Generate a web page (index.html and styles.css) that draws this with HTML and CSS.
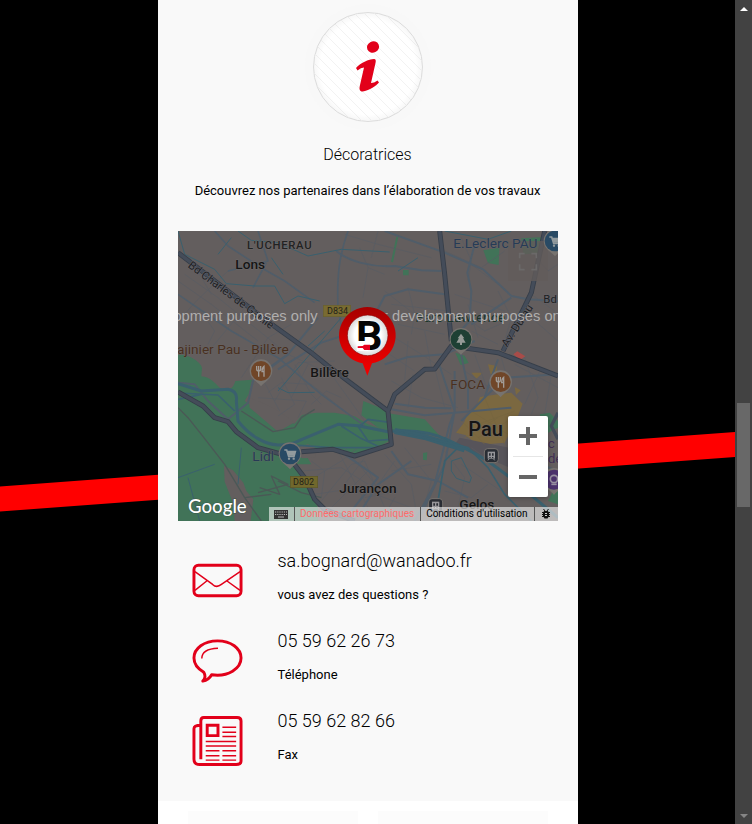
FILE: index.html
```html
<!DOCTYPE html>
<html lang="fr">
<head>
<meta charset="utf-8">
<meta name="viewport" content="width=device-width, initial-scale=1">
<title>Bognard - Contact</title>
<link rel="stylesheet" href="styles.css">
</head>
<body>
<div class="viewport">
  <svg class="stripe" viewBox="0 0 735 824" preserveAspectRatio="none" aria-hidden="true">
    <path d="M0 486.500L735 432V457L0 511.500Z" fill="#f00"/>
  </svg>

  <main class="page">
    <section class="contact">
      <div class="badge">
        <svg viewBox="0 0 108 108" aria-hidden="true">
          <defs>
            <pattern id="hatch" width="10" height="10" patternUnits="userSpaceOnUse">
              <path d="M-1 -1L11 11" stroke="#f2f2f2" stroke-width="1"/>
            </pattern>
            <radialGradient id="rim"><stop offset=".88" stop-color="#000" stop-opacity="0"/><stop offset="1" stop-color="#000" stop-opacity=".03"/></radialGradient>
          </defs>
          <circle cx="54" cy="54" r="54" fill="url(#hatch)"/>
          <circle cx="54" cy="54" r="54" fill="url(#rim)"/>
          <ellipse cx="59" cy="34" rx="6.200" ry="5.600" transform="rotate(-25 59 34)" fill="#e2001a"/>
          <path d="M42 55C46 50 55 46 60 46C62 46 62 48 61.500 50L57 70Q60 70 63.500 67.500L65 69.500C60 75 52 78.500 48.500 78.500C45.500 78.500 45 76 46 72L50 54.500Q47 54.500 43.500 57.500Z" fill="#e2001a"/>
        </svg>
      </div>
      <h2 class="heading">Décoratrices</h2>
      <p class="intro">Découvrez nos partenaires dans l’élaboration de vos travaux</p>

      <div class="map">
        <svg class="map-canvas" viewBox="0 0 1140 870" role="img" aria-label="Carte de Pau et Billère">
          <rect width="1140" height="870" fill="#635e5e"/>

          <g fill="#417358">
            <path d="M0 372C30 368 72 395 72 412L70 436C95 438 110 455 125 470C150 482 165 475 172 450L222 446L212 490L200 510L240 535L260 553L350 578L372 552L415 545L470 545L530 556L570 580L600 590L640 596L634 630L560 672L470 655L380 665L400 700L340 700L362 725L400 790L420 830V870H0Z"/>
            <path d="M556 510L625 538L640 548L740 565L785 614L700 604L640 596L600 590L550 553Z"/>
            <path d="M655 17L661 17L645 94L639 92ZM916 58L964 50L962 102L930 96ZM1030 22L1100 18L1090 66L1036 70ZM675 117L692 117L692 133L675 133ZM832 365L860 374L872 396L848 402ZM1085 550L1115 545L1140 570V590L1110 605ZM735 666L748 664L746 688L735 686ZM1130 770L1140 760V820L1110 810Z"/>
          </g>
          <g fill="#635e5e">
            <path d="M138 705L165 718L196 755L205 780L226 805L218 870H170L165 815L140 752ZM212 500C290 525 330 560 350 574L300 602L215 530ZM345 652L390 640L415 652L412 680L372 682Z"/>
          </g>
          <g fill="#7b6840">
            <path d="M906 498L960 490L1000 485L1034 518L1020 555L1002 590L980 635L900 642L862 612L834 605L858 575L870 545L893 532ZM930 400L957 405L956 428L938 430ZM880 425L914 425L895 443ZM1010 468L1028 478L1014 492Z"/>
          </g>
          <path d="M1006 370L1018 361L1042 376L1026 387Z" fill="#a84c49"/>
          <path d="M845 620L1000 652V712L905 672L830 640Z" fill="#57545a"/>

          <!-- Minor streets -->
          <g fill="none" stroke="#575c64" stroke-width="2">
            <path d="M20 130L120 200L330 370L460 430L560 570M30 70L100 190M0 150L100 220L240 330M60 230L110 300L90 340M0 270L60 205L150 120M105 345L205 225M190 440L270 320L340 280"/>
            <path d="M270 485L310 455L400 460L500 540M290 510L360 395L470 390M240 500L385 510L360 560M310 440L350 520L300 555M350 400L400 490L430 520M260 455L305 540M390 400L340 500M400 520L445 480L490 500"/>
            <path d="M500 10L600 40L760 80M545 50L570 110L620 130M570 110L555 200M600 0L580 80M620 180L710 250L700 310M640 220L810 240M690 170L710 250L790 270M660 280L800 310M650 320L730 370L820 430M690 330L680 450M740 300L760 410M620 360L710 420M640 450L730 500L840 530M705 430L690 530M770 410L800 530"/>
            <path d="M850 20L880 90L870 150M800 60L910 110L980 60M880 100L960 160M830 190L980 240M850 250L920 300L1010 260M870 220L900 320M960 180L1000 260L980 330M1040 40L1110 120L1140 100M1060 190L1130 240M1060 260L1140 330M880 300L960 340M860 420L950 480M890 370L930 480M970 380L990 450M1010 400L1140 470M1040 380L1080 500L1060 550M1090 410L1040 520M1120 430L1100 550"/>
            <path d="M370 720L490 710L570 760M390 750L490 690L540 650M410 790L540 770L700 830M430 810L520 700L560 690L620 830M440 850L570 720M480 660L570 830L560 870M500 650L600 770M620 670L700 760L720 870M650 690L580 790M680 650L760 750L740 820M640 720L760 700M560 800L660 780M800 660L860 740L840 830M850 700L970 780M880 650L950 700M400 690L440 720L430 800M560 680L500 760M650 800L610 870M800 780L880 800L930 760"/>
            <path d="M850 570L920 640M880 540L990 610M920 500L980 640M860 620L960 560M900 580L1010 540M900 620L990 570" stroke="#75653f"/>
          </g>

          <!-- Secondary roads -->
          <g fill="none" stroke="#505d69" stroke-width="6" stroke-linejoin="round">
            <path d="M110 0L150 45L250 110L320 150L410 215M510 0C485 70 476 130 480 230L500 340M150 120L270 90L240 0M265 95L225 170M0 190L160 300L300 380L430 490L560 585" stroke-width="5"/>
            <path d="M475 60C510 90 580 110 650 105L730 118L790 120M800 190L690 175L620 195L570 290L430 335L300 415M420 260L330 370L245 430M620 400L690 378L800 370L890 330"/>
            <path d="M620 0L800 65L915 115L1000 195L1050 205L1140 210M890 40L868 125L880 180L875 270L820 330M1000 200L880 280M640 535L740 553L830 545L1000 530M650 518L740 530L820 532M780 390L830 540L815 580L770 760L710 870M845 350L870 470L870 535M830 420L830 540L800 700L730 850M960 385L940 440L920 500"/>
            <path d="M0 455L50 460L90 510L150 565L210 515L225 450L330 370M640 660L690 730L780 750L870 800M700 690L600 760L555 830M850 570L980 440L1140 430M520 840L600 740L500 670M1060 690L1140 720"/>
            <path d="M0 530L30 560L70 610L140 700L200 800L250 870M190 540L285 602L350 590L370 560L410 535M240 785L330 760L280 735L305 790L245 770M200 800L280 790M300 750L370 785L430 800" stroke="#4b5856" stroke-width="4"/>
          </g>

          <!-- Rivers and canals -->
          <g fill="none" stroke="#3a606e" stroke-linejoin="round">
            <path d="M0 458L70 480L150 475Q180 480 175 510L180 570C215 615 260 640 300 642Q340 643 370 626L480 580L540 584L630 602Q740 590 820 632C920 680 930 690 990 735L1140 860" stroke-width="9"/>
            <path d="M650 600L740 618L860 655" stroke-width="18"/>
            <path d="M540 586L570 630L640 625M640 597L740 620L870 650L930 710L980 790L1060 870M490 585L545 620L610 650L460 650L320 640M0 486L120 492L170 540M0 505L70 490M545 585L570 565L640 575M800 620L840 650L800 690L770 870" stroke-width="5"/>
            <path d="M0 0L20 70L110 115L145 158L230 165L290 165L320 218L360 195L425 210M180 0L220 28L300 35L390 75L490 55L635 63M280 80L315 130M160 20L120 70M490 260L370 400L300 480M440 300L390 345M300 470L330 485L410 484M0 740L110 700M30 740L65 870M800 0L930 25L1000 0M660 120L720 80M190 650L180 760M820 690L850 680L880 740L875 755L835 742L820 720Z" stroke-width="3"/>
          </g>

          <!-- Main roads -->
          <g fill="none" stroke-linejoin="round">
            <path d="M0 65L260 265L400 365L450 405L630 540L640 640L530 675L465 655L370 662M0 483L75 525L110 560L150 572L175 602L240 650L330 675L380 740L410 805L440 835L530 870M630 540L650 490L740 415L770 414L820 345L960 365L1140 435M785 0L800 130L820 330M1100 0L1060 185L975 360" stroke="#363e49" stroke-width="15"/>
            <path d="M0 65L260 265L400 365L450 405L630 540L640 640L530 675L465 655L370 662M0 483L75 525L110 560L150 572L175 602L240 650L330 675L380 740L410 805L440 835L530 870M630 540L650 490L740 415L770 414L820 345L960 365L1140 435M785 0L800 130L820 330M1100 0L1060 185L975 360M1140 545L1120 585L1140 625" stroke="#444c59" stroke-width="10"/>
          </g>

          <rect x="990" y="30" width="120" height="120" fill="#615b5a" opacity=".8"/>
          <path d="M1025 82V68H1040M1060 68H1075V82M1025 100V116H1040M1060 116H1075V100" fill="none" stroke="#6b6969" stroke-width="5"/>

          <g class="road-sign">
            <rect x="436" y="223" width="82" height="34" fill="#796b31" stroke="#6a602e" stroke-width="2"/><text x="447" y="249">D834</text>
            <rect x="337" y="736" width="82" height="34" fill="#71682c" stroke="#5e5827" stroke-width="2"/><text x="345" y="762">D802</text>
          </g>

          <!-- Place names -->
          <g class="place">
            <text class="district" x="207" y="53">L'UCHERAU</text>
            <text x="172" y="114">Lons</text>
            <text x="397" y="438">Billère</text>
            <text x="484" y="786">Jurançon</text>
            <text x="844" y="834">Gelos</text>
            <text class="city" x="871" y="614">Pau</text>
          </g>
          <g class="street">
            <text transform="translate(28 107) rotate(37)">Bd Charles de Gaulle</text>
            <text transform="translate(988 350) rotate(-57)">Av. Dufau</text>
            <text x="1096" y="215">Bd</text>
          </g>
          <g class="poi">
            <text class="food" x="-3" y="368">ajinier Pau - Billère</text>
            <text class="food" x="817" y="473">FOCA</text>
            <text class="shop" x="826" y="50">E.Leclerc PAU</text>
            <text class="shop" x="223" y="690">Lidl</text>
            <text class="park" x="712" y="274">Parc Lawrence</text>
            <text class="castle" x="1109" y="652">c</text>
            <text class="castle" x="1109" y="695">de</text>
          </g>

          <!-- Place pins -->
          <defs>
            <path id="pin" d="M0 46C-7 34 -34 25 -34 -1A34 34 0 1 1 34 -1C34 25 7 34 0 46Z" fill="#77736f"/>
            <g id="cutlery" fill="none" stroke="#a19c97" stroke-width="4"><path d="M-13 -15V-6Q-13 0 -7 0Q-1 0 -1 -6V-15M-7 -15V17M9 17V-14Q3 -10 3 2H9"/></g>
            <g id="cart"><path d="M-17 -12H-10L-4 7H12L16 -7H-8" fill="none" stroke="#929b9e" stroke-width="5"/><path d="M-8 -7H16L12 5H-4Z" fill="#929b9e"/><circle cx="-3" cy="14" r="3.500" fill="#929b9e"/><circle cx="11" cy="14" r="3.500" fill="#929b9e"/></g>
            <g id="station"><rect x="-21" y="-21" width="42" height="42" rx="10" fill="#292d34" stroke="#77736f" stroke-width="3"/><path d="M-11 -12H11V9H-11Z" fill="#96969a"/><path d="M-7 -7H-2V0H-7ZM2 -7H7V0H2ZM-6 4H-2V7H-6ZM2 4H6V7H2Z" fill="#292d34"/><path d="M-10 14L-7 10M10 14L7 10" stroke="#96969a" stroke-width="3"/></g>
          </defs>
          <g transform="translate(249 420)"><use href="#pin"/><circle r="30" fill="#704628"/><use href="#cutlery"/></g>
          <g transform="translate(968 453)"><use href="#pin"/><circle r="30" fill="#704628"/><use href="#cutlery"/></g>
          <g transform="translate(336 669)"><use href="#pin"/><circle r="31" fill="#294a64"/><use href="#cart"/></g>
          <g transform="translate(1131 30)"><use href="#pin"/><circle r="31" fill="#294a64"/><use href="#cart"/></g>
          <g transform="translate(849 326)"><use href="#pin"/><circle r="31" fill="#1e4034"/><path d="M0 -18L10 -4H6L14 9H3V16H-3V9H-14L-6 -4H-10Z" fill="#959b97"/></g>
          <g transform="translate(1128 746)"><use href="#pin"/><circle r="30" fill="#4b316c"/><circle cy="-2" r="11" fill="none" stroke="#9890a1" stroke-width="5"/><path d="M-8 14H8" stroke="#9890a1" stroke-width="5"/></g>
          <use href="#station" x="940" y="674"/>
          <use href="#station" x="773" y="824"/>

          <!-- Watermark -->
          <g class="watermark">
            <text x="419" y="271" text-anchor="end">For development purposes only</text>
            <text x="564" y="271">For development purposes only</text>
          </g>

          <!-- Agency marker -->
          <defs>
            <linearGradient id="red" x2="0" y2="1"><stop stop-color="#a60000"/><stop offset=".5" stop-color="#d10000"/><stop offset="1" stop-color="#f40000"/></linearGradient>
            <radialGradient id="disc"><stop offset=".65" stop-color="#fff"/><stop offset="1" stop-color="#d8d8d8"/></radialGradient>
          </defs>
          <path d="M568 434L554 397A85 85 0 1 1 582 397Z" fill="url(#red)"/>
          <circle cx="569" cy="313" r="61" fill="url(#disc)" stroke="#8f0000" stroke-width="2"/>
          <text class="logo-b" x="534" y="356">B</text>
          <path d="M536 330H571V360H536Z" fill="#fff"/>
          <path d="M539 346L554 345L559 341H576V357H559L554 351L539 351Z" fill="#e6001f"/>
          <text class="google" x="30" y="846">Google</text>
        </svg>

        <div class="zoom">
          <button type="button" aria-label="Zoom avant"><svg viewBox="0 0 18 18"><path d="M9 0V18M0 9H18" stroke="#666" stroke-width="4"/></svg></button>
          <button type="button" aria-label="Zoom arrière"><svg viewBox="0 0 18 18"><path d="M0 9H18" stroke="#666" stroke-width="4"/></svg></button>
        </div>

        <div class="legal">
          <button type="button" class="cell keys" aria-label="Raccourcis clavier"><svg viewBox="0 0 14 9"><rect width="14" height="9" fill="#333"/><path d="M1 2H13M1 4.500H13" stroke="#bbb" stroke-width="1.200" stroke-dasharray="1.200 1"/><path d="M4 7H10" stroke="#bbb"/></svg></button>
          <button type="button" class="cell data">Données cartographiques</button>
          <a class="cell terms" href="#conditions">Conditions d'utilisation</a>
          <a class="cell bug" href="#signaler" aria-label="Signaler une erreur"><svg viewBox="0 0 10 10"><path d="M3 2H7L8 4V7L6.500 9.500H3.500L2 7V4Z" fill="#111"/><path d="M2.500 0L4 2M7.500 0L6 2M1 3.500H9M1 5.500H9M1 7.500H9" stroke="#111"/><path d="M4 4.500H6M4 6.500H6" stroke="#ccc"/></svg></a>
        </div>
      </div>

      <ul class="details">
        <li class="detail">
          <svg class="icon" viewBox="0 0 52 52" aria-hidden="true"><g fill="none" stroke="#e2001a"><rect x="2" y="10.500" width="48" height="31" rx="4.500" stroke-width="3"/><path d="M3 17L21 30Q25 34 30 30L49 17M3 36L15 26.500M49 36L35 26" stroke-width="1.500"/></g></svg>
          <div><h3>sa.bognard@wanadoo.fr</h3><p>vous avez des questions ?</p></div>
        </li>
        <li class="detail">
          <svg class="icon" viewBox="0 0 52 52" aria-hidden="true"><g fill="none" stroke="#e2001a"><path d="M26 6C12.500 6 2 13.500 2 23.500C2 30 6 34.500 12 38Q15 43 11 47Q17 46 20 40.500C37 43 50 34 50 23.500C50 13.500 39.500 6 26 6Z" stroke-width="3" stroke-linejoin="round"/><path d="M10 24Q10 14 26.500 13.500" stroke-width="1.500"/></g></svg>
          <div><h3>05 59 62 26 73</h3><p>Téléphone</p></div>
        </li>
        <li class="detail">
          <svg class="icon" viewBox="0 0 52 52" aria-hidden="true"><g fill="none" stroke="#e2001a"><path d="M9 45V6Q9 2.500 12 2.500H46Q50 2.500 50 6V47Q50 50.500 45 50.500H8Q2 50.500 2 45V14Q2 10.500 9 10.500" stroke-width="3" stroke-linejoin="round"/><path d="M15.500 10.500H26.500V21H15.500Z" stroke-width="3"/><path d="M31 12.500H45M31 17.500H45M31 22H45M14 27H45M14 31.500H45M14 36.500H28M31 36.500H45M14 41.500H28M31 41.500H45M14 46H28M31 46H45" stroke-width="1.500"/></g></svg>
          <div><h3>05 59 62 82 66</h3><p>Fax</p></div>
        </li>
      </ul>
    </section>

    <section class="cards"><div class="card"></div><div class="card"></div></section>
  </main>

  <div class="scrollbar" aria-hidden="true">
    <span class="arrow up"></span>
    <span class="thumb"></span>
    <span class="arrow down"></span>
  </div>
</div>
</body>
</html>
```

FILE: styles.css
```css
* { box-sizing: border-box; }

body {
  margin: 0;
  background: #000;
  color: #000;
  font: 13px/20px Roboto, "Liberation Sans", sans-serif;
}

h2, h3, p, ul { margin: 0; padding: 0; }
button { border: 0; padding: 0; font: inherit; cursor: pointer; }

.viewport {
  position: relative;
  display: grid;
  grid-template-columns: 1fr 17px;
  height: 100vh;
  overflow: hidden;
}

/* Diagonal band behind the page */
.stripe {
  position: absolute;
  top: 0;
  left: 0;
  width: calc(100% - 17px);
  height: 100%;
}

.page {
  position: relative;
  width: 100%;
  max-width: 420px;
  min-height: 100%;
  margin: 0 auto;
  background: #fff;
}

.contact {
  padding: 12px 20px 21px;
  background: #f9f9f9;
}

.badge {
  width: 110px;
  height: 110px;
  margin: 0 auto;
  border: 1px solid #ddd;
  border-radius: 50%;
  background: #fff;
  box-shadow: 0 0 0 8px #f8f8f8;
}
.badge svg { display: block; width: 100%; }

.heading {
  margin-top: 23px;
  font-size: 16px;
  font-weight: 300;
  line-height: 20px;
  text-align: center;
}

.intro {
  margin: 16px 0 30px;
  text-align: center;
}

.map { position: relative; overflow: hidden; }
.map-canvas { display: block; width: 100%; height: auto; }
.map-canvas text { font-family: Roboto, sans-serif; }

.map-canvas .road-sign text { font-size: 27px; fill: #252318; }
.place text {
  font-size: 41px;
  font-weight: 500;
  fill: #151515;
  stroke: #6d6969;
  stroke-width: 3px;
  paint-order: stroke;
}
.place .district { font-size: 34px; letter-spacing: 2px; fill: #222; }
.place .city { font-size: 60px; }
.street text {
  font-size: 34px;
  fill: #1d1f22;
  stroke: #65636a;
  stroke-width: 3px;
  paint-order: stroke;
}
.poi text {
  font-size: 41px;
  stroke: #6b6767;
  stroke-width: 2px;
  paint-order: stroke;
}
.poi .food { fill: #49301f; }
.poi .shop { fill: #263b56; }
.poi .park { fill: #1b352b; }
.poi .castle { fill: #402e52; }
.map-canvas .watermark text {
  font-family: "Liberation Sans", sans-serif;
  font-size: 44px;
  fill: #b0aeae;
}
.map-canvas .logo-b { font-size: 124px; font-weight: 700; fill: #050505; }
.map-canvas .google {
  font-family: Lato, sans-serif;
  font-size: 56px;
  font-weight: 500;
  fill: #fff;
  stroke: #3f5347;
  stroke-width: 3px;
  paint-order: stroke;
}

.zoom {
  position: absolute;
  right: 10px;
  bottom: 24px;
  width: 40px;
  border-radius: 2px;
  background: #fff;
  box-shadow: 0 1px 4px rgba(0, 0, 0, .3);
}
.zoom button {
  display: grid;
  place-items: center;
  width: 40px;
  height: 40px;
  background: none;
}
.zoom button + button::before {
  content: "";
  width: 30px;
  height: 1px;
  background: #e6e6e6;
}
.zoom button + button {
  grid-template-rows: 1px 40px;
  height: 41px;
}
.zoom svg { width: 18px; height: 18px; }

.legal {
  position: absolute;
  right: 0;
  bottom: 0;
  display: flex;
  height: 14px;
  font-size: 10px;
  line-height: 14px;
}
.cell {
  display: flex;
  align-items: center;
  padding: 0 6px 0 5px;
  border-left: 1px solid #555;
  background: rgba(245, 245, 245, .62);
  color: #000;
  text-decoration: none;
  white-space: nowrap;
}
.keys { border-left: 0; }
.keys svg { width: 14px; height: 9px; }
.data { color: #ff6b6b; }
.bug { padding: 0 7px 0 6px; }
.bug svg { width: 10px; height: 10px; }

.details { margin-top: 19px; list-style: none; }
.detail {
  display: grid;
  grid-template-columns: 51px 1fr;
  gap: 35px;
  height: 80px;
  padding: 8px 0 0 14px;
}
.icon { width: 51px; height: 51px; margin-top: 7px; }
.detail h3 {
  font-size: 18px;
  font-weight: 300;
  line-height: 26px;
}
.detail p { margin-top: 11px; }

.cards {
  display: grid;
  grid-template-columns: 1fr 1fr;
  gap: 20px;
  padding: 10px 30px;
}
.card { height: 160px; background: #fcfcfc; }

.scrollbar {
  position: relative;
  display: grid;
  grid-template-rows: 17px 1fr 17px;
  justify-items: center;
  background: #424242;
}
.thumb {
  width: 13px;
  height: 104px;
  margin-top: calc((100vh - 138px) * .563);
  background: #686868;
}
.arrow {
  align-self: center;
  border: 4px solid transparent;
}
.up { border-top: 0; border-bottom-color: #fff; }
.down { border-bottom: 0; border-top-color: #868686; }
```
